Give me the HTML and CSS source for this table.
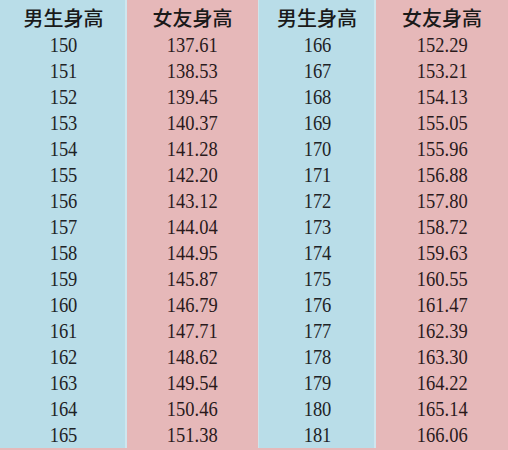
FILE: index.html
```html
<!DOCTYPE html>
<html lang="zh-Hant">
<head>
<meta charset="utf-8">
<link rel="stylesheet" href="styles.css">
</head>
<body>
<div class="table">
  <div class="cell boy head"><span class="h">男生身高</span></div>
  <div class="cell girl head"><span class="h">女友身高</span></div>
  <div class="cell boy head b2"><span class="h">男生身高</span></div>
  <div class="cell girl head"><span class="h">女友身高</span></div>
</div>
<div id="rows" class="table"></div>
<script src="script.js"></script>
</body>
</html>
```
FILE: script.js
```js
var left = [["150","137.61"],["151","138.53"],["152","139.45"],["153","140.37"],["154","141.28"],["155","142.20"],["156","143.12"],["157","144.04"],["158","144.95"],["159","145.87"],["160","146.79"],["161","147.71"],["162","148.62"],["163","149.54"],["164","150.46"],["165","151.38"]];
var right = [["166","152.29"],["167","153.21"],["168","154.13"],["169","155.05"],["170","155.96"],["171","156.88"],["172","157.80"],["173","158.72"],["174","159.63"],["175","160.55"],["176","161.47"],["177","162.39"],["178","163.30"],["179","164.22"],["180","165.14"],["181","166.06"]];
var rows = document.getElementById("rows");
var html = "";
for (var i = 0; i < left.length; i++) {
  html += '<div class="cell boy"><span class="n">' + left[i][0] + '</span></div>';
  html += '<div class="cell girl"><span class="n">' + left[i][1] + '</span></div>';
  html += '<div class="cell boy b2"><span class="n">' + right[i][0] + '</span></div>';
  html += '<div class="cell girl"><span class="n">' + right[i][1] + '</span></div>';
}
rows.innerHTML = html;
```
FILE: styles.css
```css
html, body {
  margin: 0;
  padding: 0;
  background: #e6b8b9;
}
.table {
  display: grid;
  grid-template-columns: 127px 131px 118px 132px;
  width: 508px;
}
.cell {
  display: flex;
  justify-content: center;
  align-items: center;
  height: 26px;
  color: #1e2326;
}
.head {
  height: 32px;
  align-items: center;
}
.boy {
  background: #b9dde8;
  box-shadow: inset -2px 0 0 #cfe6ee;
}
.girl {
  background: #e6b8b9;
  color: #2a1a1c;
}
.b2 {
  box-shadow: inset 1px 0 0 #cfe4ea, inset -2px 0 0 #cfe6ee;
}
.h {
  font-family: "Noto Sans CJK TC", "Noto Sans CJK SC", sans-serif;
  font-size: 20px;
  font-weight: 500;
  line-height: 1;
  color: #1a1a1a;
  letter-spacing: 0;
  padding-top: 3px;
}
.n {
  display: inline-block;
  font-family: "Liberation Serif", serif;
  font-size: 22px;
  line-height: 26px;
  transform: scaleX(0.84);
}
```
